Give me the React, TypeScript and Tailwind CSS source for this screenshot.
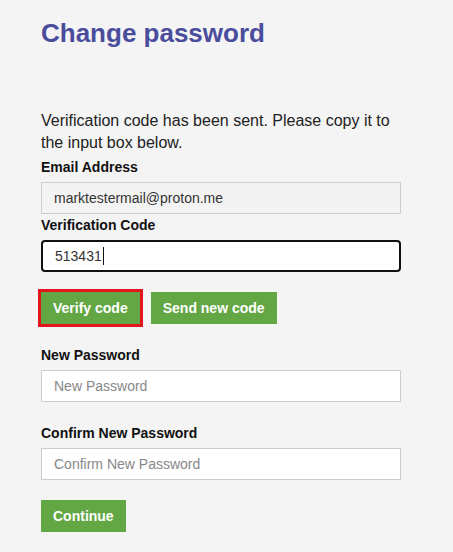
import React from "react";

const inputBase =
  "block w-[360px] h-8 px-3 text-[14px] outline-none border border-[#cccccc]";

export default function App() {
  return (
    <div
      className="min-h-[552px] bg-[#f4f4f4] pl-[41px] pt-[19px] text-[#111]"
      style={{ fontFamily: '"Liberation Sans", Arial, sans-serif' }}
    >
      <h1 className="text-[26px] leading-[28px] font-bold text-[#4a4c9c]">
        Change password
      </h1>

      <p className="mt-[63px] w-[360px] text-[16px] leading-[22px] text-[#222]">
        Verification code has been sent. Please copy it to the input box below.
      </p>

      {/* Email */}
      <label className="block mt-[3px] text-[14px] leading-5 font-bold">
        Email Address
      </label>
      <input
        readOnly
        value="marktestermail@proton.me"
        className={`${inputBase} mt-[5px] bg-[#f3f3f3] text-[#333]`}
      />

      {/* Verification code, focused */}
      <label className="block mt-px text-[14px] leading-5 font-bold">
        Verification Code
      </label>
      <div className="mt-[5px] flex items-center w-[360px] h-8 px-3 bg-white border-2 border-[#111] rounded-[4px] text-[14px] text-[#333]">
        513431
        <span className="inline-block w-px h-[18px] bg-[#111] ml-px" />
      </div>

      <div className="mt-5 flex gap-[11px]">
        <button className="h-8 px-3 bg-[#62a744] text-white text-[14px] font-bold outline-[3px] outline-solid outline-[#e3161f]">
          Verify code
        </button>
        <button className="h-8 px-3 bg-[#62a744] text-white text-[14px] font-bold">
          Send new code
        </button>
      </div>

      <label className="block mt-[21px] text-[14px] leading-5 font-bold">
        New Password
      </label>
      <input
        placeholder="New Password"
        className={`${inputBase} mt-[5px] bg-white placeholder:text-[#888]`}
      />

      <label className="block mt-[21px] text-[14px] leading-5 font-bold">
        Confirm New Password
      </label>
      <input
        placeholder="Confirm New Password"
        className={`${inputBase} mt-[5px] bg-white placeholder:text-[#888]`}
      />

      <button className="mt-5 h-8 px-3 bg-[#62a744] text-white text-[14px] font-bold">
        Continue
      </button>
    </div>
  );
}
